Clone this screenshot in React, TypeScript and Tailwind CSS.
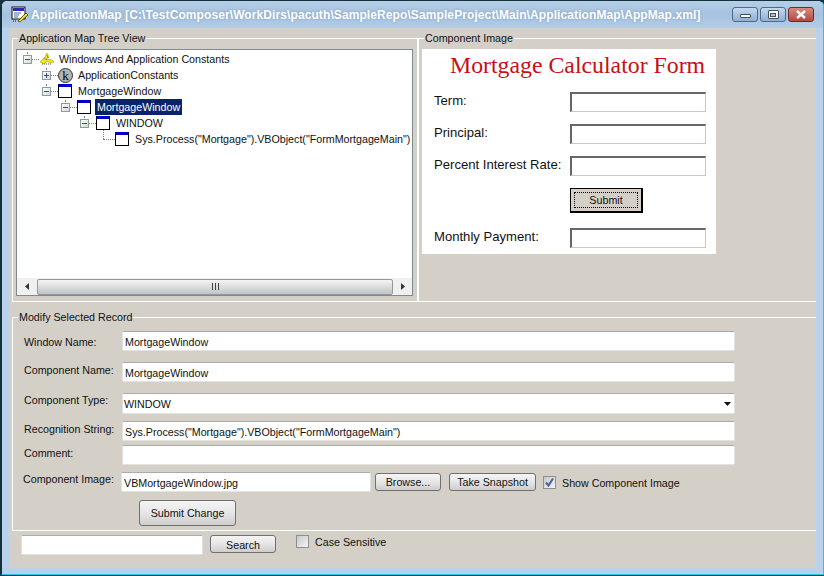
import React from 'react';

const uiFont = 'font-["Liberation_Sans",Arial,sans-serif] text-[10.7px] leading-[16px] text-[#111]';

const treeRows = [
  { depth: 0, expander: 'minus', icon: 'constants', label: 'Windows And Application Constants' },
  { depth: 1, expander: 'plus', icon: 'k', label: 'ApplicationConstants' },
  { depth: 1, expander: 'minus', icon: 'window', label: 'MortgageWindow' },
  { depth: 2, expander: 'minus', icon: 'window', label: 'MortgageWindow', selected: true },
  { depth: 3, expander: 'minus', icon: 'window', label: 'WINDOW' },
  { depth: 4, expander: 'leaf', icon: 'window', label: 'Sys.Process("Mortgage").VBObject("FormMortgageMain")' },
];

const WindowIcon = () => (
  <span className="block h-[14px] w-[14px] border border-black border-t-[3px] border-t-[#0000c8] bg-white" />
);

const ConstantsIcon = () => (
  <svg width="16" height="14" viewBox="0 0 16 14" className="block">
    <path d="M1 10 L6 5 L8 1 L10 5 L7 7 L13 8 L15 10 L11 11 L8 9 L5 12 Z" fill="#f4e812" stroke="#a8a020" strokeWidth="0.6" />
    <path d="M3 12 H13" stroke="#555" strokeDasharray="1 1" />
    <path d="M5 6 L8 8 M8 3 L9 6" stroke="#666" strokeWidth="0.7" />
  </svg>
);

const KIcon = () => (
  <span className='flex h-[15px] w-[15px] items-center justify-center rounded-full border border-[#333] bg-[#b4b4b4] font-["Liberation_Serif",serif] text-[13px] leading-none text-black'>
    k
  </span>
);

const Expander = ({ type }: { type: string }) => (
  <span className="relative block h-[9px] w-[9px] shrink-0 border border-[#8f9ba3] bg-linear-to-br from-white to-[#d8d8d0]">
    <span className="absolute left-[1px] top-[3px] h-[1px] w-[5px] bg-[#3a4a80]" />
    {type === 'plus' && <span className="absolute left-[3px] top-[1px] h-[5px] w-[1px] bg-[#3a4a80]" />}
    <span className="absolute bottom-full left-[3px] h-[4px] border-l border-dotted border-[#808080]" />
  </span>
);

const Tree = () => (
  <div className="flex h-[247px] w-[397px] flex-col overflow-hidden border border-[#7f8a90] bg-white">
    <div className="flex-1 pt-[1px]">
      {treeRows.map((row) => (
        <div key={row.label + row.depth} className="flex h-[16px] items-center" style={{ paddingLeft: 6 + row.depth * 19 }}>
          {row.expander === 'leaf' ? (
            <span className="relative h-[16px] w-[16px] shrink-0">
              <span className="absolute left-[4px] top-[8px] w-[12px] border-t border-dotted border-[#808080]" />
              <span className="absolute left-[4px] top-[-1px] h-[9px] border-l border-dotted border-[#808080]" />
            </span>
          ) : (
            <>
              <Expander type={row.expander} />
              <span className="w-[7px] shrink-0 border-t border-dotted border-[#808080]" />
            </>
          )}
          <span className="flex w-[18px] shrink-0 justify-start">
            {row.icon === 'window' && <WindowIcon />}
            {row.icon === 'k' && <KIcon />}
            {row.icon === 'constants' && <ConstantsIcon />}
          </span>
          <span className={`whitespace-nowrap px-[2px] ${row.selected ? 'bg-[#0a246a] text-white' : ''}`}>{row.label}</span>
        </div>
      ))}
    </div>
    <div className="flex h-[17px] items-center bg-[#f0f0f0]">
      <div className="flex w-[20px] justify-center">
        <svg width="4" height="7" viewBox="0 0 4 7"><path d="M4 0V7L0 3.5Z" fill="#333" /></svg>
      </div>
      <div className="flex h-[16px] w-[356px] items-center justify-center rounded-[2px] border border-[#979797] bg-linear-to-b from-[#f4f4f4] via-[#dcdcdc] to-[#bfc4c8]">
        <span className="h-[7px] w-[7px] bg-[repeating-linear-gradient(90deg,#444_0,#444_1px,transparent_1px,transparent_3px)]" />
      </div>
      <div className="flex flex-1 justify-center">
        <svg width="4" height="7" viewBox="0 0 4 7"><path d="M0 0V7L4 3.5Z" fill="#333" /></svg>
      </div>
    </div>
  </div>
);

const MockField = () => (
  <span className="block h-[20px] w-[136px] border-2 border-b border-r border-[#666] border-b-[#c8c8c8] border-r-[#c8c8c8] bg-white" />
);

const MortgageRow = ({ label, className }: { label: string; className: string }) => (
  <div className={`flex ${className}`}>
    <span className="w-[136px] text-[13.1px] leading-[17px] text-[#111]">{label}</span>
    <MockField />
  </div>
);

const ComponentImage = () => (
  <div className='h-[205px] w-[294px] bg-white pl-[12px] font-["Liberation_Sans",Arial,sans-serif]'>
    <div className='whitespace-nowrap pl-[16px] pt-[1px] font-["Liberation_Serif",serif] text-[23.8px] leading-[30px] text-[#c80f14]'>
      Mortgage Calculator Form
    </div>
    <MortgageRow label="Term:" className="mt-[12px]" />
    <MortgageRow label="Principal:" className="mt-[12px]" />
    <MortgageRow label="Percent Interest Rate:" className="mt-[12px]" />
    <div className="ml-[136px] mt-[12px] h-[25px] w-[73px] border border-black border-b-2 border-r-2 bg-[#d4d0c8] p-[3px]">
      <div className="flex h-full items-center justify-center border border-dotted border-black text-[10.7px] text-[#111]">Submit</div>
    </div>
    <MortgageRow label="Monthly Payment:" className="mt-[15px]" />
  </div>
);

const inputClass =
  'block h-[20px] rounded-[2px] border border-[#e2e2e0] border-t-[#aaaaaa] bg-white px-[2px] pt-[1px] text-[10.7px] leading-[16px] text-[#111] outline-none';

const FormRow = ({ label, labelTop, className, children }: { label: string; labelTop: string; className: string; children: React.ReactNode }) => (
  <div className={`flex ${className}`}>
    <span className={`w-[109px] shrink-0 whitespace-nowrap pl-[11px] ${labelTop}`}>{label}</span>
    {children}
  </div>
);

const Button = ({ label, className }: { label: string; className: string }) => (
  <button className={`rounded-[3px] border border-[#707070] bg-linear-to-b from-[#f5f5f5] via-[#e6e6e6] to-[#cdcdcd] text-[10.7px] leading-[16px] text-[#111] ${className}`}>
    {label}
  </button>
);

const CheckBox = ({ checked }: { checked?: boolean }) => (
  <span className="block h-[13px] w-[13px] border border-[#8e8f8f] bg-linear-to-br from-[#c8c8c8] to-[#f4f4f4]">
    {checked && (
      <svg width="11" height="11" viewBox="0 0 11 11" className="block">
        <path d="M2 5.5 L4.5 8.5 L9 1.5" fill="none" stroke="#4a5fa5" strokeWidth="2" />
      </svg>
    )}
  </span>
);

const CaptionButton = ({ className, children }: { className: string; children: React.ReactNode }) => (
  <div className={`flex h-[15px] w-[26px] items-center justify-center rounded-[3px] border border-[#4d6a8c] ${className}`}>{children}</div>
);

export default function App() {
  return (
    <div className="h-[576px] w-[824px] overflow-hidden bg-[#14303c]">
      <div className={`ml-[1px] flex h-[575px] w-[823px] flex-col rounded-t-[6px] border border-[#14303c] border-b-[#22c8e4] border-r-[#22c8e4] bg-[#b9d1ea] ${uiFont}`}>
        {/* Title bar */}
        <div className="flex h-[27px] shrink-0 items-center rounded-t-[5px] bg-linear-to-b from-[#b6cfe8] via-[#a6c2df] to-[#b4cde6] pl-[9px] pr-[9px]">
          <svg width="18" height="18" viewBox="0 0 18 18" className="shrink-0">
            <rect x="1" y="1" width="13" height="12" fill="#fff" stroke="#111" />
            <rect x="2" y="2" width="11" height="3" fill="#2a2ab0" />
            <path d="M3 7H10M3 9H8M3 11H7" stroke="#3a6ea8" />
            <path d="M7 15L15 7L17 9L9 16Z" fill="#f2e21c" stroke="#222" strokeWidth="0.7" />
            <path d="M2 15H6" stroke="#111" strokeDasharray="1 1" />
          </svg>
          <span className="ml-[2px] flex-1 whitespace-nowrap text-[12px] font-bold tracking-[0.095px] text-white [text-shadow:0_0_3px_#7f9fc0]">
            ApplicationMap [C:\TestComposer\WorkDirs\pacuth\SampleRepo\SampleProject\Main\ApplicationMap\AppMap.xml]
          </span>
          <div className="flex gap-[2px]">
            <CaptionButton className="bg-linear-to-b from-[#c5d8ec] to-[#8fb0d2]">
              <span className="mt-[3px] h-[4px] w-[11px] rounded-[1px] border border-[#44505c] bg-white" />
            </CaptionButton>
            <CaptionButton className="bg-linear-to-b from-[#c5d8ec] to-[#8fb0d2]">
              <span className="flex h-[9px] w-[11px] items-center justify-center rounded-[1px] border border-[#44505c] bg-white">
                <span className="h-[4px] w-[6px] border border-[#44505c] bg-[#a9c4df]" />
              </span>
            </CaptionButton>
            <CaptionButton className="border-[#6b2a2a] bg-linear-to-b from-[#d98a7e] to-[#b04a40]">
              <svg width="12" height="9" viewBox="0 0 12 9">
                <path d="M2 1L10 8M10 1L2 8" stroke="#fff" strokeWidth="2.4" />
              </svg>
            </CaptionButton>
          </div>
        </div>

        {/* Client area */}
        <div className="ml-[7px] h-[540px] w-[807px] bg-[#d4d0c8] pt-[2px]">
          <div className="ml-[3px] flex">
            <fieldset className="h-[272px] w-[406px] border border-white pl-[3px]">
              <legend className="ml-[2px] px-[1px]">Application Map Tree View</legend>
              <div className="mt-[3px]">
                <Tree />
              </div>
            </fieldset>
            <fieldset className="h-[272px] flex-1 border border-r-0 border-white pl-[3px]">
              <legend className="ml-[2px] px-[1px]">Component Image</legend>
              <div className="mt-[3px]">
                <ComponentImage />
              </div>
            </fieldset>
          </div>

          <fieldset className="ml-[3px] mt-[7px] h-[222px] border border-r-0 border-white">
            <legend className="ml-[5px] px-[1px]">Modify Selected Record</legend>
            <FormRow label="Window Name:" labelTop="pt-[3px]" className="mt-[6px]">
              <input readOnly value="MortgageWindow" className={`${inputClass} w-[613px]`} />
            </FormRow>
            <FormRow label="Component Name:" labelTop="" className="mt-[11px]">
              <input readOnly value="MortgageWindow" className={`${inputClass} w-[613px]`} />
            </FormRow>
            <FormRow label="Component Type:" labelTop="-mt-[1px]" className="mt-[11px]">
              <div className="flex h-[21px] w-[613px] items-center justify-between rounded-[2px] border border-[#e2e2e0] border-t-[#aaaaaa] bg-white pl-[1px] pr-[3px]">
                <span>WINDOW</span>
                <svg width="7" height="4" viewBox="0 0 7 4"><path d="M0 0H7L3.5 4Z" fill="#111" /></svg>
              </div>
            </FormRow>
            <FormRow label="Recognition String:" labelTop="" className="mt-[7px]">
              <input readOnly value={'Sys.Process("Mortgage").VBObject("FormMortgageMain")'} className={`${inputClass} w-[613px]`} />
            </FormRow>
            <FormRow label="Comment:" labelTop="" className="mt-[4px]">
              <input readOnly value="" className={`${inputClass} w-[613px]`} />
            </FormRow>
            <div className="mt-[7px] flex items-start">
              <span className="-mt-[1px] w-[108px] shrink-0 whitespace-nowrap pl-[10px]">Component Image:</span>
              <input readOnly value="VBMortgageWindow.jpg" className={`${inputClass} w-[250px]`} />
              <Button label="Browse..." className="ml-[4px] mt-[1px] h-[18px] w-[66px]" />
              <Button label="Take Snapshot" className="ml-[8px] mt-[1px] h-[18px] w-[87px]" />
              <span className="ml-[7px] mt-[4px]">
                <CheckBox checked />
              </span>
              <span className="ml-[6px] mt-[3px] whitespace-nowrap">Show Component Image</span>
            </div>
            <Button label="Submit Change" className="ml-[126px] mt-[8px] h-[26px] w-[97px]" />
          </fieldset>

          <div className="ml-[12px] mt-[4px] flex items-start">
            <input readOnly value="" className={`${inputClass} h-[19px] w-[182px]`} />
            <Button label="Search" className="ml-[7px] h-[18px] w-[66px] pt-[1px]" />
            <span className="ml-[20px]">
              <CheckBox />
            </span>
            <span className="ml-[6px] -mt-[1px] whitespace-nowrap">Case Sensitive</span>
          </div>
        </div>
      </div>
    </div>
  );
}
